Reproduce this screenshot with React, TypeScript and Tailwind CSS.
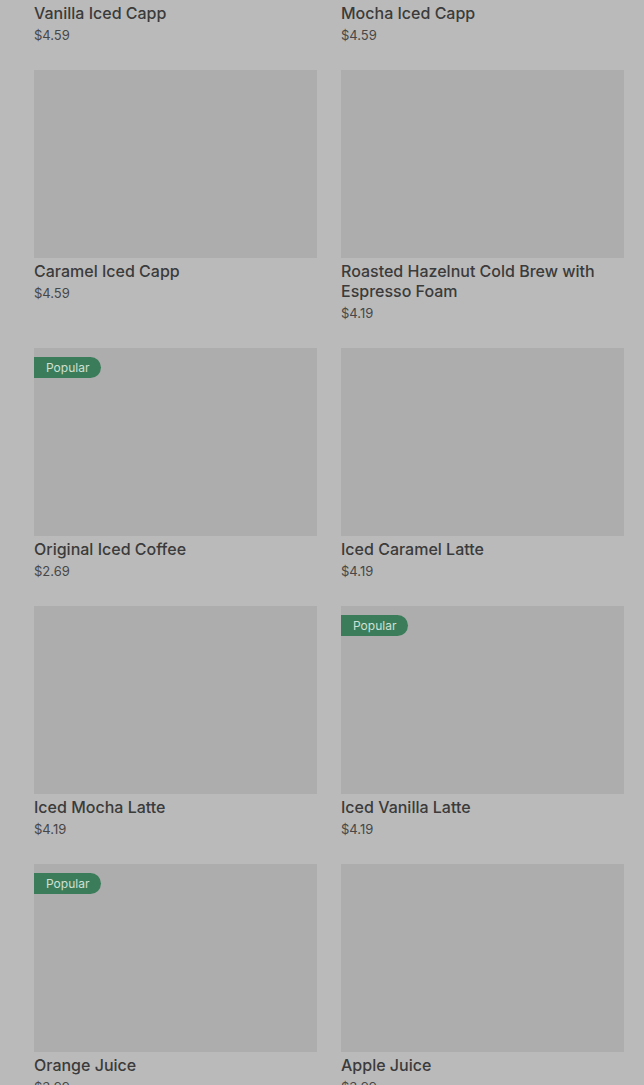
import React from "react";

type Item = { name: string; price: string; popular?: boolean };

const items: Item[] = [
  { name: "Vanilla Iced Capp", price: "$4.59" },
  { name: "Mocha Iced Capp", price: "$4.59" },
  { name: "Caramel Iced Capp", price: "$4.59" },
  { name: "Roasted Hazelnut Cold Brew with Espresso Foam", price: "$4.19" },
  { name: "Original Iced Coffee", price: "$2.69", popular: true },
  { name: "Iced Caramel Latte", price: "$4.19" },
  { name: "Iced Mocha Latte", price: "$4.19" },
  { name: "Iced Vanilla Latte", price: "$4.19", popular: true },
  { name: "Orange Juice", price: "$3.99", popular: true },
  { name: "Apple Juice", price: "$3.99" },
];

export default function App() {
  return (
    <div
      className="h-[1085px] w-[644px] overflow-hidden bg-[#bababa]"
      style={{ fontFamily: "Inter, 'Noto Sans', sans-serif" }}
    >
      <div className="-mt-[188px] grid grid-cols-2 gap-x-[24px] gap-y-[25px] pl-[34px] pr-[20px]">
        {items.map((it) => (
          <div key={it.name} className="flex flex-col">
            <div className="relative h-[188px] bg-[#adadad]">
              {it.popular && (
                <div className="absolute left-0 top-[9px] flex h-[21px] items-center rounded-r-full bg-[#3b7d5b] pl-[12px] pr-[12px] text-[12px] text-[#cfe0d5]">
                  Popular
                </div>
              )}
            </div>
            <div className="mt-[3px] text-[16px] font-medium leading-5 text-[#3b3b3b]">
              {it.name}
            </div>
            <div className="mt-0.5 text-[13px] leading-5 text-[#474747]">
              {it.price}
            </div>
          </div>
        ))}
      </div>
    </div>
  );
}
